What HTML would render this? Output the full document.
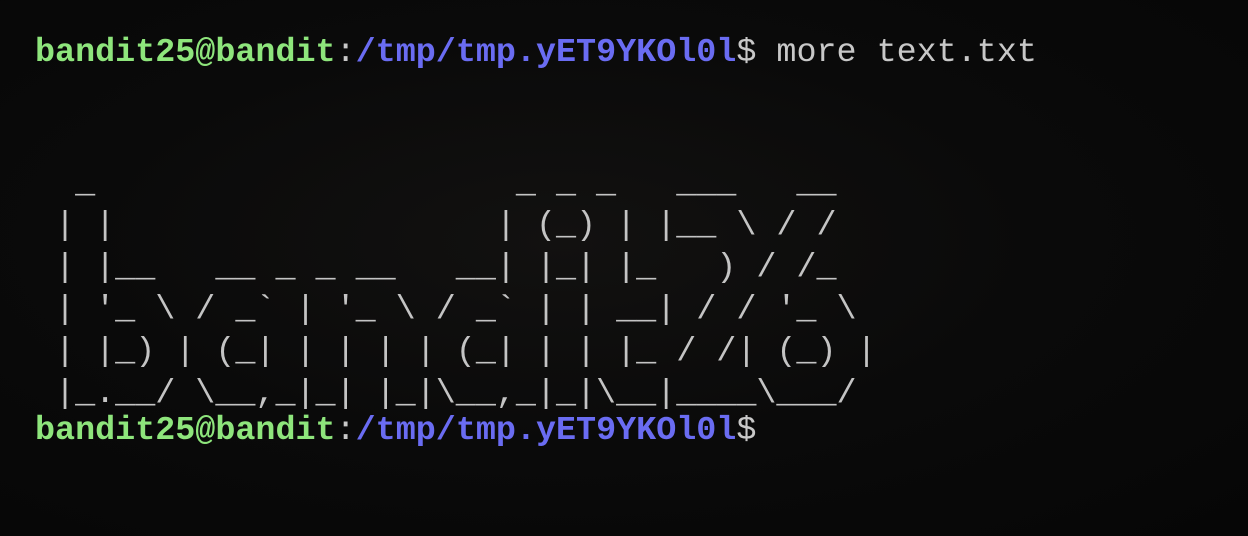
<!DOCTYPE html>
<html><head><meta charset="utf-8"><style>
html,body{margin:0;padding:0;width:1248px;height:536px;overflow:hidden;background:#080808;}
body{background:radial-gradient(ellipse at 45% 45%,#121110 0%,#0a0a0a 50%,#060606 100%);}
pre{margin:0;position:absolute;left:35px;top:32px;font-family:"Liberation Mono",monospace;font-size:33.4px;line-height:42px;color:#cfcfcf;white-space:pre;}
.g{color:#8ee57c;font-weight:bold}
.b{color:#6a6cf2;font-weight:bold}
.c{color:#c8c8c8}
.a{color:#c4c4c4;position:relative;top:5px}
</style></head><body>
<pre><span class="g">bandit25@bandit</span><span class="c">:</span><span class="b">/tmp/tmp.yET9YKOl0l</span><span class="c">$ more text.txt</span>


<span class="a">  _                     _ _ _   ___   __  
 | |                   | (_) | |__ \ / /  
 | |__   __ _ _ __   __| |_| |_   ) / /_  
 | '_ \ / _` | '_ \ / _` | | __| / / '_ \ 
 | |_) | (_| | | | | (_| | | |_ / /| (_) |
 |_.__/ \__,_|_| |_|\__,_|_|\__|____\___/ </span>
<span class="g">bandit25@bandit</span><span class="c">:</span><span class="b">/tmp/tmp.yET9YKOl0l</span><span class="c">$</span></pre>
</body></html>
